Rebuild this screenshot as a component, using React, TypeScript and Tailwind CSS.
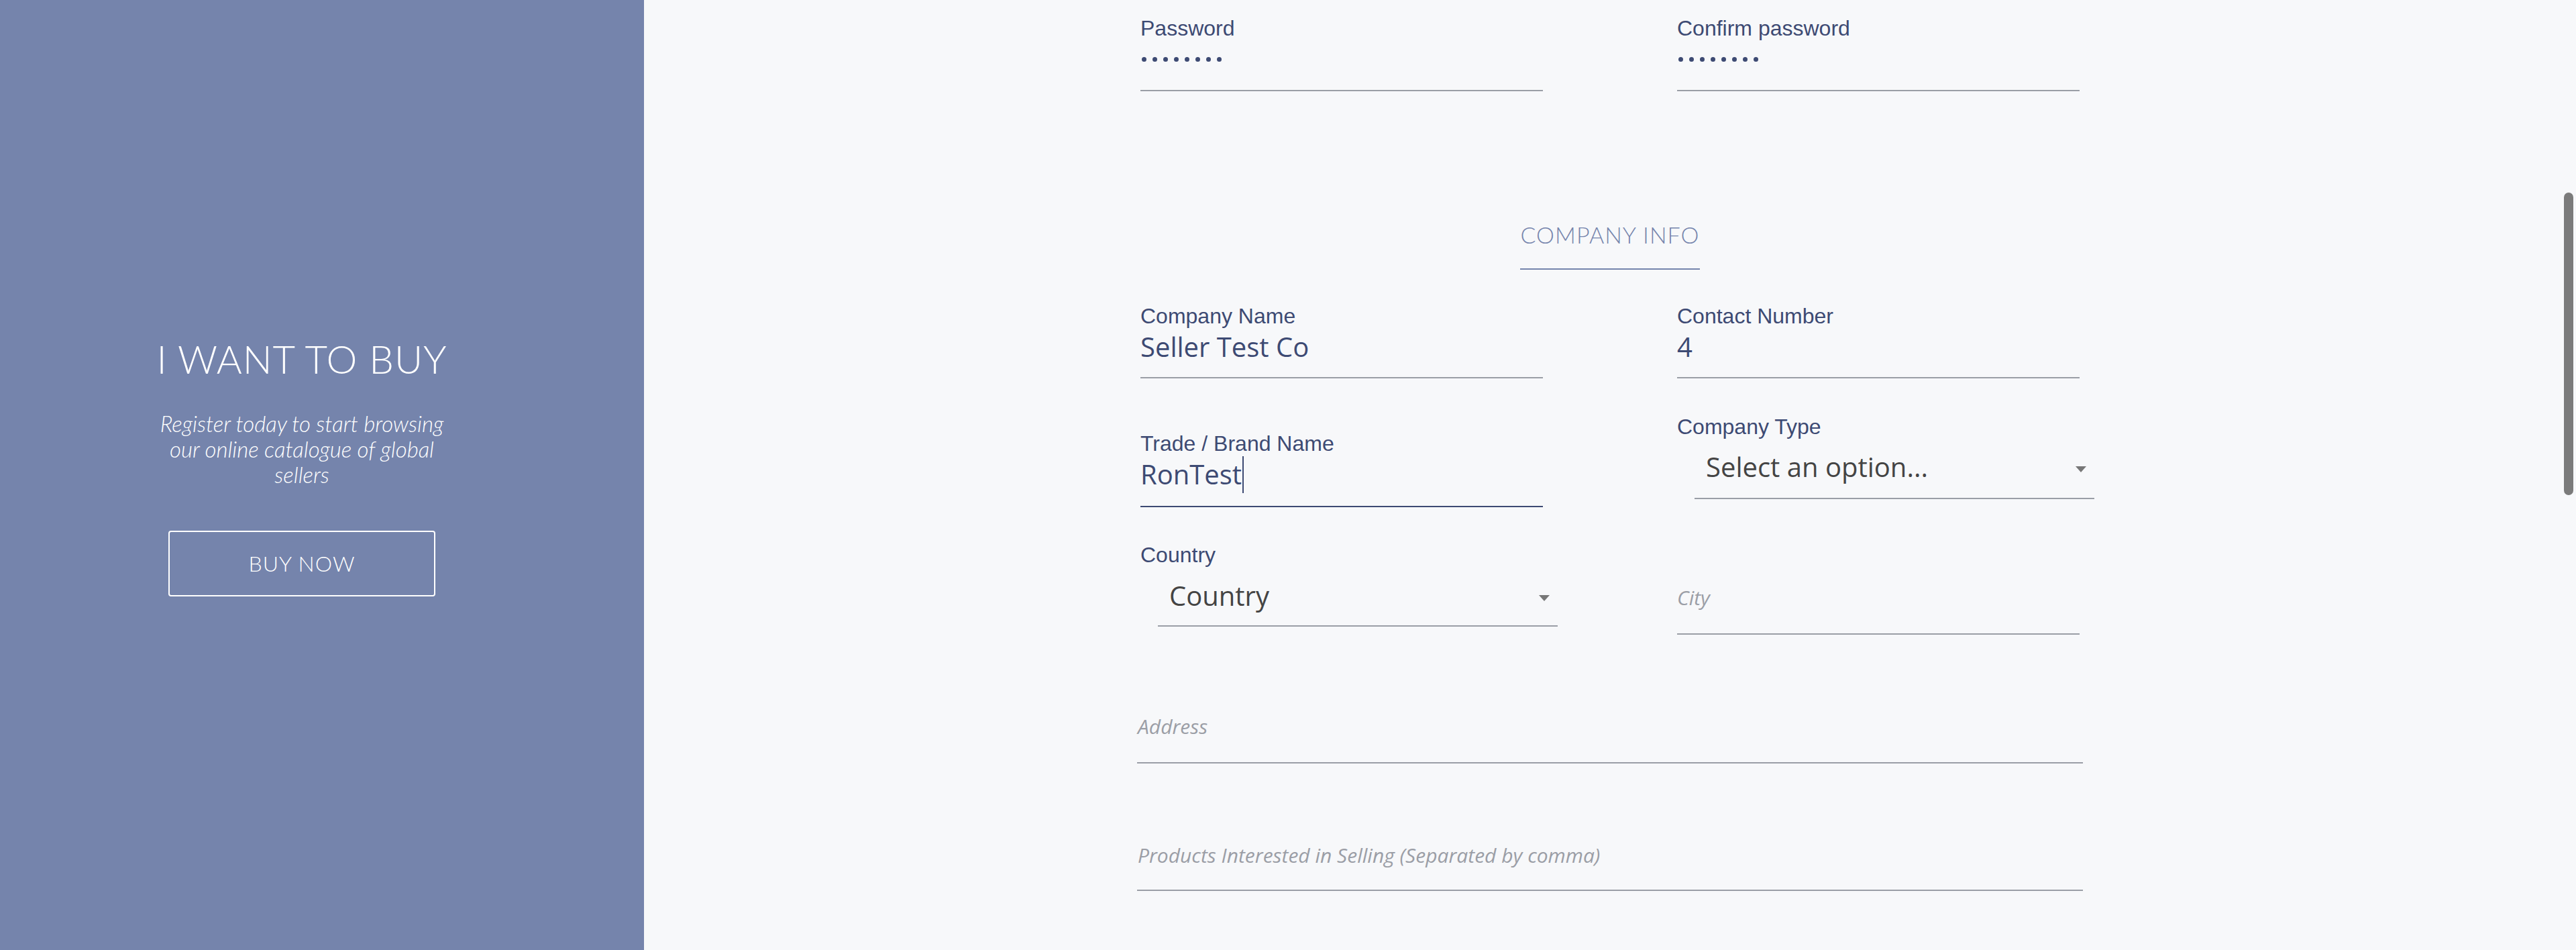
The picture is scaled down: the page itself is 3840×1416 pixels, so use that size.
import React from "react";

const label = "font-['Liberation_Sans',Arial,sans-serif] text-[32px] leading-[32px] text-[#3d4a73]";
const value = "font-['Open_Sans',sans-serif] text-[40px] leading-[40px] text-[#3d4a73] whitespace-nowrap";
const placeholder = "font-['Open_Sans',sans-serif] italic text-[30px] leading-[30px] text-[#9b9ea6] whitespace-nowrap";
const line = "h-[2px] bg-[#9a9ea6]";

const Arrow = () => (
  <span className="mt-[6px] mr-[12px] h-0 w-0 border-x-[8px] border-x-transparent border-t-[9px] border-t-[#777]" />
);

const SelectBox = ({ text, lineGap }: { text: string; lineGap: string }) => (
  <div className="ml-[26px] w-[596px]">
    <div className="flex items-center justify-between pl-[17px]">
      <span className="font-['Open_Sans',sans-serif] text-[40px] leading-[40px] text-[#444] whitespace-nowrap">{text}</span>
      <Arrow />
    </div>
    <div className={`${lineGap} ${line}`} />
  </div>
);

const Dots = () => (
  <div className="mt-[26px] flex h-[8px] items-center gap-[9px] pl-[2px]">
    {Array.from({ length: 8 }).map((_, i) => (
      <span key={i} className="h-[7px] w-[7px] rounded-full bg-[#3d4a73]" />
    ))}
  </div>
);

export default function App() {
  return (
    <div className="relative flex h-[1416px] w-full overflow-hidden bg-[#f7f8fa]">
      {/* left promo panel */}
      <div className="flex w-[960px] shrink-0 flex-col items-center bg-[#7584ac] pr-[60px] pt-[506px] font-['Lato',sans-serif] text-white">
        <h1 className="text-[58px] font-light leading-[58px] tracking-[1px] whitespace-nowrap">I WANT TO BUY</h1>
        <p className="mt-[48px] text-center text-[33px] font-light italic leading-[38px] whitespace-nowrap">
          Register today to start browsing
          <br />
          our online catalogue of global
          <br />
          sellers
        </p>
        <button className="mt-[65px] flex h-[98px] w-[398px] items-center justify-center rounded-[4px] border-2 border-white text-[32px] font-light tracking-[1px]">
          BUY NOW
        </button>
      </div>

      {/* form */}
      <div className="flex-1 pt-[26px]">
        <div className="mx-auto w-[1400px]">
          <div className="grid grid-cols-2 gap-x-[200px]">
            <div>
              <div className={label}>Password</div>
              <Dots />
              <div className={`mt-[42px] ${line}`} />
            </div>
            <div>
              <div className={label}>Confirm password</div>
              <Dots />
              <div className={`mt-[42px] ${line}`} />
            </div>
          </div>

          <div className="mt-[197px] flex flex-col items-center">
            <div className="font-['Lato',sans-serif] text-[34px] font-light leading-[34px] tracking-[1px] text-[#7584ac]">COMPANY INFO</div>
            <div className="mt-[33px] h-[2px] w-[268px] bg-[#7584ac]" />
          </div>

          <div className="mt-[53px] grid grid-cols-2 gap-x-[200px]">
            <div>
              <div className={label}>Company Name</div>
              <div className={`mt-[10px] ${value}`}>Seller Test Co</div>
              <div className={`mt-[25px] ${line}`} />
            </div>
            <div>
              <div className={label}>Contact Number</div>
              <div className={`mt-[10px] ${value}`}>4</div>
              <div className={`mt-[25px] ${line}`} />
            </div>
          </div>

          <div className="mt-[56px] grid grid-cols-2 items-start gap-x-[200px]">
            <div className="pt-[25px]">
              <div className={label}>Trade / Brand Name</div>
              <div className={`mt-[10px] flex h-[40px] items-center ${value}`}>
                RonTest
                <span className="-my-[8px] ml-[1px] inline-block h-[55px] w-[2px] bg-[#3d4a73]" />
              </div>
              <div className="mt-[27px] h-[2px] bg-[#3d4a73]" />
            </div>
            <div>
              <div className={label}>Company Type</div>
              <div className="mt-[24px]">
                <SelectBox text="Select an option..." lineGap="mt-[26px]" />
              </div>
            </div>
          </div>

          <div className="mt-[55px] grid grid-cols-2 items-start gap-x-[200px]">
            <div>
              <div className={label}>Country</div>
              <div className="mt-[25px]">
                <SelectBox text="Country" lineGap="mt-[24px]" />
              </div>
            </div>
            <div className="pt-[65px]">
              <div className={placeholder}>City</div>
              <div className={`mt-[38px] ${line}`} />
            </div>
          </div>
        </div>

        <div className="mx-auto mt-[122px] w-[1410px]">
          <div className={`pl-[1px] ${placeholder}`}>Address</div>
          <div className={`mt-[38px] ${line}`} />
        </div>

        <div className="mx-auto mt-[122px] w-[1410px]">
          <div className={`pl-[1px] ${placeholder}`}>Products Interested in Selling (Separated by comma)</div>
          <div className={`mt-[36px] ${line}`} />
        </div>
      </div>

      {/* overlay scrollbar */}
      <div className="absolute right-[4px] top-[287px] h-[451px] w-[14px] rounded-full bg-[#7b7b7b]" />
    </div>
  );
}
